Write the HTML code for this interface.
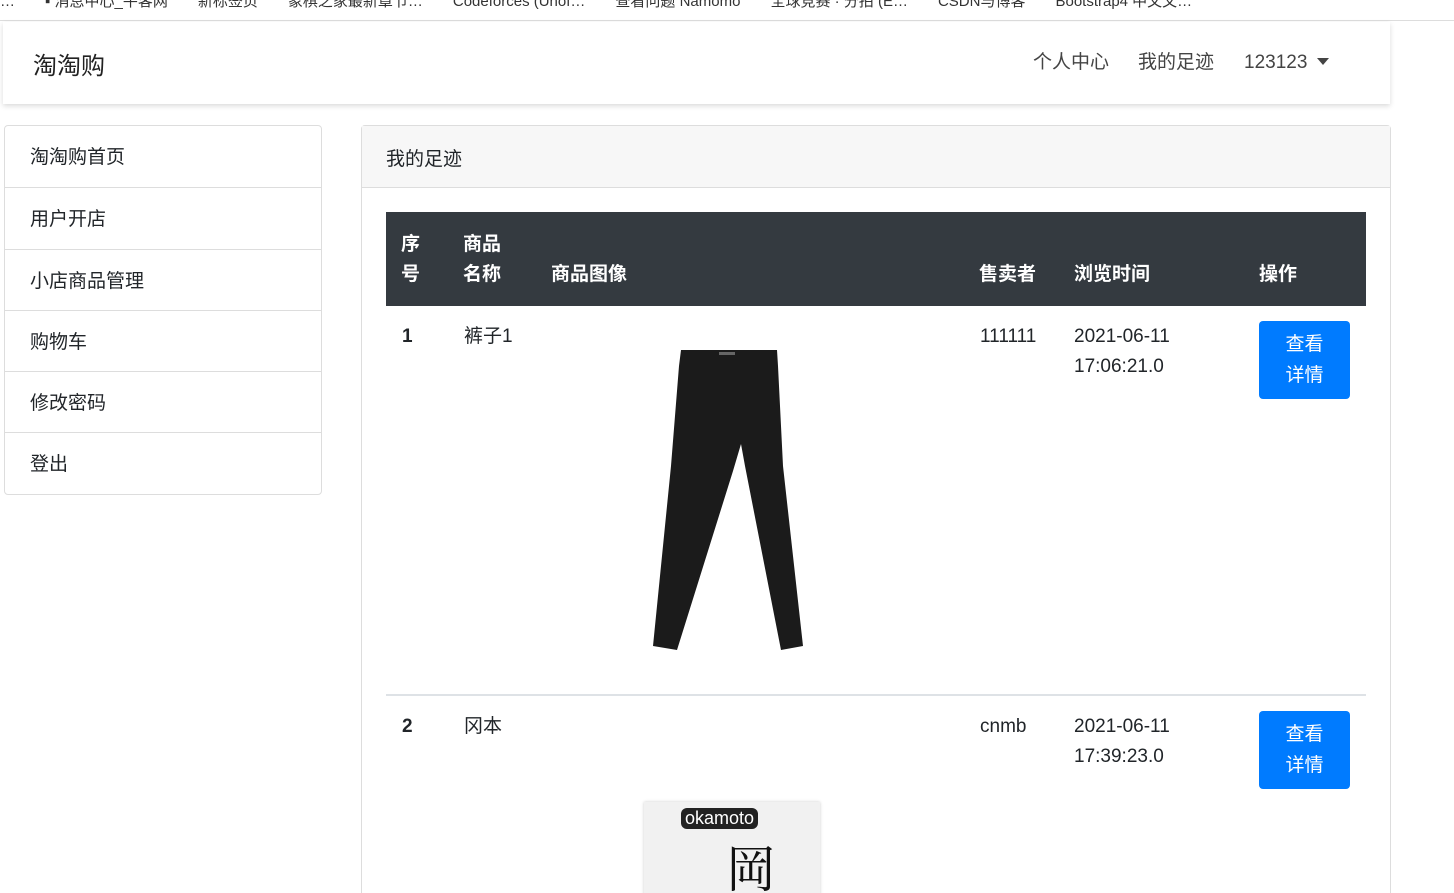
<!DOCTYPE html>
<html style="height:893px;overflow:hidden"><head><meta charset="utf-8"><style>
*{box-sizing:border-box;margin:0;padding:0}
body{width:1454px;height:893px;overflow:hidden;background:#fff;font-family:"Liberation Sans","Noto Sans CJK SC",sans-serif;color:#212529;font-size:19px;position:relative}
.bm{position:absolute;top:-10px;left:0;height:20px;font-size:15px;color:#333;white-space:nowrap}
.bm span{margin-right:30px}
.topline{position:absolute;top:20px;left:0;width:1454px;height:1px;background:#ddd}
.nav{position:absolute;left:3px;top:22px;width:1387px;height:82px;background:#fff;box-shadow:0 2px 5px rgba(0,0,0,.15)}
.brand{position:absolute;left:30px;top:24px;font-size:24px;color:#222}
.nl{position:absolute;top:28px;font-size:19px;color:#444;line-height:26px}
.caret{display:inline-block;border-left:6px solid transparent;border-right:6px solid transparent;border-top:7px solid #444;margin-left:10px;vertical-align:3px}
.side{position:absolute;left:4px;top:125px;width:318px;border:1px solid #ddd;border-radius:4px}
.side div{height:61.3px;line-height:63px;padding-left:25px;border-top:1px solid #ddd;font-size:19px}
.side div:first-child{border-top:none}
.card{position:absolute;left:361px;top:125px;width:1030px;height:800px;border:1px solid #ddd;border-radius:4px}
.ch{height:62px;background:#f7f7f7;border-bottom:1px solid #ddd;padding:18px 0 0 24px;font-size:19px}
.th{position:absolute;left:24px;top:86px;width:980px;height:94px;background:#343a40;color:#fff;font-weight:bold;font-size:19px}
.th span{position:absolute;line-height:30px}
.c{position:absolute;font-size:19px;line-height:30px}
.btn{position:absolute;width:91px;height:78px;background:#007bff;color:#fff;border-radius:4px;text-align:center;padding-top:8px;line-height:31px;font-size:19px}
.sep{position:absolute;left:24px;top:568px;width:980px;height:2px;background:#dee2e6}
</style></head><body>
<div class="bm"><span>…</span><span>▪ 消息中心_牛客网</span><span>新标签页</span><span>象棋之家最新章节…</span><span>Codeforces (Unof…</span><span>查看问题 Namomo</span><span>全球竞赛 · 分拍 (E…</span><span>CSDN与博客</span><span>Bootstrap4 中文文…</span></div>
<div class="topline"></div>
<div class="nav"><div class="brand">淘淘购</div>
<div class="nl" style="left:1030px">个人中心</div><div class="nl" style="left:1135px">我的足迹</div><div class="nl" style="left:1241px">123123<span class="caret"></span></div></div>
<div class="side"><div>淘淘购首页</div><div>用户开店</div><div>小店商品管理</div><div>购物车</div><div>修改密码</div><div>登出</div></div>
<div class="card"><div class="ch">我的足迹</div>
<div class="th"><span style="left:15px;top:18px">序<br>号</span><span style="left:77px;top:18px">商品<br>名称</span><span style="left:165px;top:48px">商品图像</span><span style="left:593px;top:48px">售卖者</span><span style="left:688px;top:48px">浏览时间</span><span style="left:873px;top:48px">操作</span></div>
<div class="c" style="left:40px;top:196px;font-weight:bold">1</div>
<div class="c" style="left:102px;top:196px">裤子1</div>
<div class="c" style="left:618px;top:196px">111111</div>
<div class="c" style="left:712px;top:196px">2021-06-11<br>17:06:21.0</div>
<div class="btn" style="left:897px;top:195px">查看<br>详情</div>
<svg style="position:absolute;left:285px;top:220px" width="160" height="310" viewBox="0 0 160 310">
<path d="M34 4 L130 4 L131 20 L136 120 L156 300 L134 304 L98 120 L94 98 L86 125 L30 304 L6 300 L24 120 L32 20 Z" fill="#1b1b1b"/>
<rect x="72" y="6" width="16" height="3" fill="#666"/></svg>
<div class="sep"></div>
<div class="c" style="left:40px;top:586px;font-weight:bold">2</div>
<div class="c" style="left:102px;top:586px">冈本</div>
<div class="c" style="left:618px;top:586px">cnmb</div>
<div class="c" style="left:712px;top:586px">2021-06-11<br>17:39:23.0</div>
<div class="btn" style="left:897px;top:585px">查看<br>详情</div>
<div style="position:absolute;left:282px;top:676px;width:176px;height:100px;background:#f1f1f1;box-shadow:0 0 3px #ccc">
<div style="position:absolute;left:37px;top:6px;background:#222;color:#fff;border-radius:6px;font-size:18px;padding:0 4px">okamoto</div>
<div style="position:absolute;left:82px;top:28px;font-size:50px;color:#111;font-family:'Noto Serif CJK SC',serif">岡</div></div>
</div>
</body></html>
